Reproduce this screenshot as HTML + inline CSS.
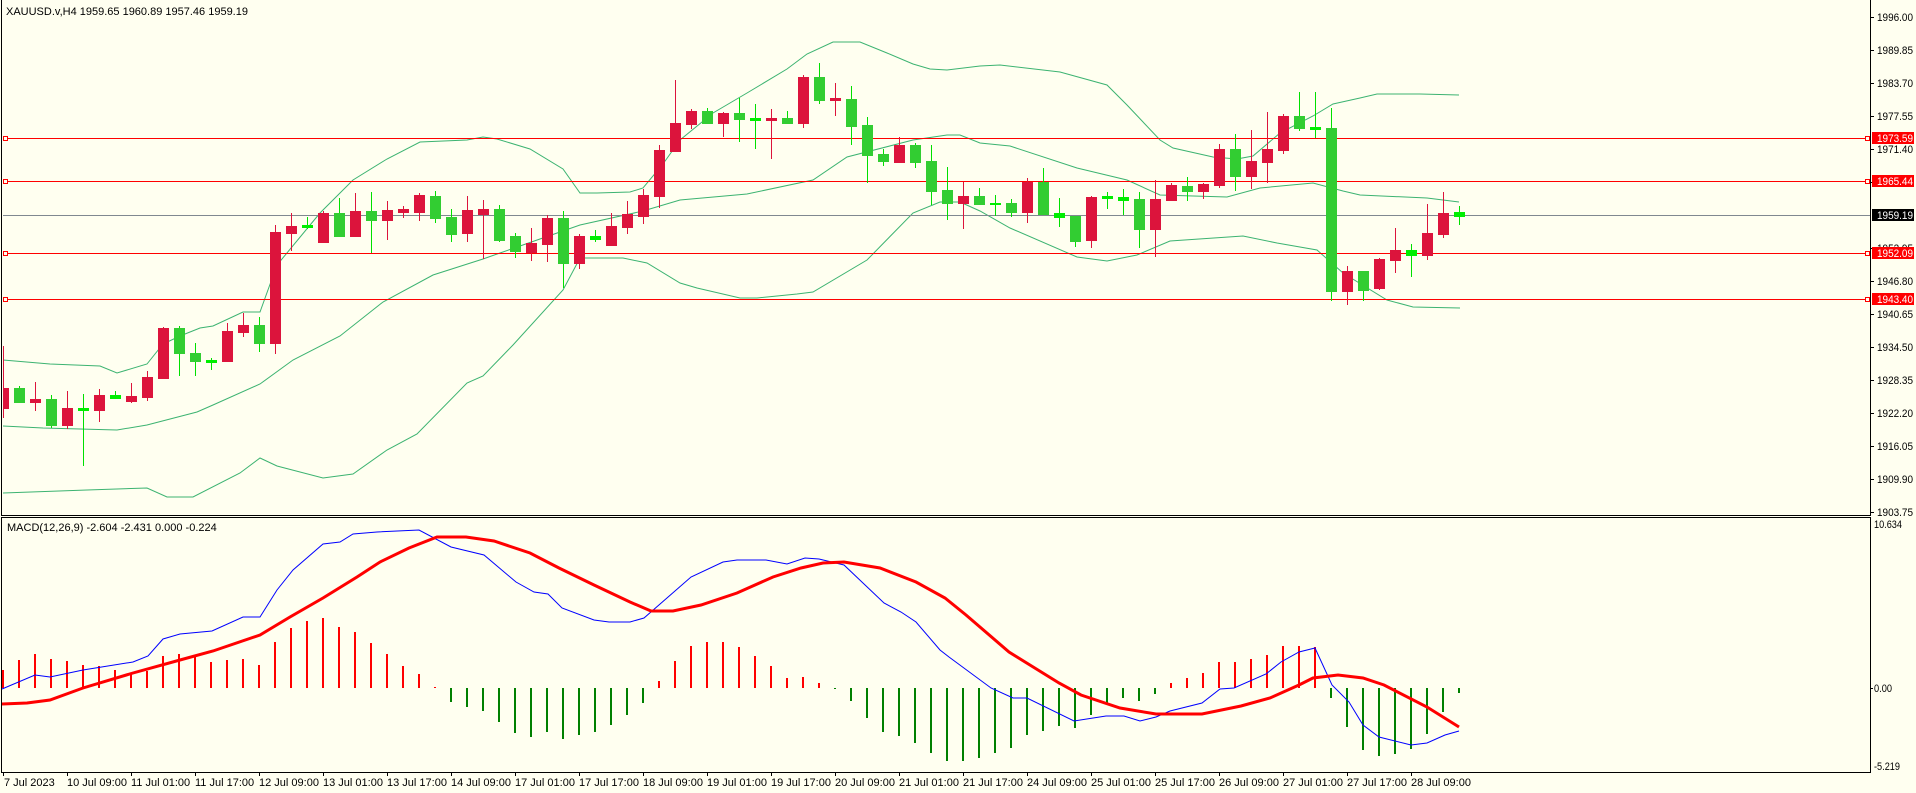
<!DOCTYPE html>
<html><head><meta charset="utf-8"><style>
html,body{margin:0;padding:0;background:#fffff0;width:1916px;height:793px;overflow:hidden}
svg{display:block}
text{font-family:"Liberation Sans",sans-serif;font-size:11px;fill:#000}
</style></head><body>
<svg width="1916" height="793" viewBox="0 0 1916 793" xmlns="http://www.w3.org/2000/svg" shape-rendering="crispEdges">
<rect width="1916" height="793" fill="#fffff0"/>
<path d="M1.5 0V515.5H1870.5V0M1.5 517.5H1870.5V772.5H1.5Z" fill="none" stroke="#000" stroke-width="1"/>
<g fill="none" stroke="#3cb371" stroke-width="1" shape-rendering="auto">
<polyline points="3,360 50,364 100,366 117,373 147,364 163,344 180,336 200,328 213,326 243,312 260,312 277,265 320,213 353,180 387,159 420,142 467,140 483,137 497,139 530,149 563,169 580,193 597,193 630,192 643,188 663,164 680,140 713,113 747,93 787,69 807,54 833,42 860,42 887,53 913,64 930,69 947,70 980,66 1000,65 1060,72 1107,85 1127,105 1160,140 1173,148 1213,157 1237,159 1253,156 1280,133 1313,116 1333,104 1360,98 1377,94 1420,94 1459,95"/>
<polyline points="3,426 43,428 117,430 147,425 197,412 213,405 260,384 293,360 340,336 383,302 433,275 483,259 500,253 580,225 643,211 680,200 747,194 813,180 847,157 913,140 947,135 960,135 980,143 1010,146 1077,168 1127,180 1160,195 1227,197 1260,188 1313,183 1343,191 1360,195 1427,198 1459,202"/>
<polyline points="3,493 87,490 147,488 167,497 193,497 240,473 260,458 277,466 323,478 353,474 387,450 417,434 467,383 483,376 513,345 563,290 580,258 623,258 647,263 680,283 697,288 740,298 757,298 797,294 813,292 867,260 913,213 940,202 960,202 980,211 1010,228 1077,257 1107,261 1137,255 1170,241 1243,236 1277,243 1317,250 1343,273 1387,300 1413,307 1460,308"/>
</g>
<g stroke-width="1" fill="none">
<path d="M3 138.5H1867M3 181.5H1867M3 253.5H1867M3 299.5H1867" stroke="#ff0000"/>
<path d="M3 215.5H1870" stroke="#808890"/>
<g stroke="#ff0000" fill="#fffff0">
<rect x="3.5" y="136.5" width="4" height="4"/><rect x="3.5" y="179.5" width="4" height="4"/><rect x="3.5" y="251.5" width="4" height="4"/><rect x="3.5" y="297.5" width="4" height="4"/>
<rect x="1865.5" y="136.5" width="4" height="4"/><rect x="1865.5" y="179.5" width="4" height="4"/><rect x="1865.5" y="251.5" width="4" height="4"/><rect x="1865.5" y="297.5" width="4" height="4"/>
</g>
</g>
<path stroke="#dc143c" stroke-width="1" d="M3.5 346V418M35.5 382V411M67.5 391V429M99.5 389V422M131.5 383V403M147.5 371V401M163.5 327V379M227.5 323V361M243.5 313V337M275.5 225V354M291.5 213V251M323.5 211V242M355.5 193V236M387.5 201V240M403.5 206V218M419.5 193V221M467.5 196V242M483.5 200V259M531.5 228V261M547.5 215V262M579.5 234V269M611.5 213V246M627.5 201V234M643.5 189V224M659.5 145V208M675.5 80V151M691.5 109V129M723.5 112V137M771.5 109V159M803.5 75V128M835.5 83V116M899.5 137V162M963.5 182V229M1027.5 178V223M1091.5 196V248M1155.5 180V257M1171.5 183V200M1203.5 183V199M1219.5 144V188M1251.5 130V189M1267.5 112V183M1283.5 114V154M1347.5 266V305M1379.5 258V290M1395.5 228V273M1427.5 204V260M1443.5 192V238"/>
<path stroke="#00e000" stroke-width="1" d="M19.5 386V403M51.5 395V428M83.5 394V466M115.5 391V399M179.5 326V376M195.5 343V376M211.5 358V370M259.5 317V352M307.5 217V229M339.5 198V237M371.5 192V253M435.5 191V223M451.5 209V242M499.5 205V242M515.5 233V258M563.5 211V288M595.5 230V242M707.5 108V124M739.5 98V142M755.5 104V149M787.5 111V123M819.5 63V104M851.5 86V145M867.5 117V183M883.5 149V166M915.5 143V168M931.5 145V205M947.5 167V220M979.5 188V204M995.5 195V216M1011.5 199V217M1043.5 168V214M1059.5 198V227M1075.5 216V247M1107.5 192V209M1123.5 189V215M1139.5 192V248M1187.5 177V201M1235.5 134V191M1299.5 92V131M1315.5 92V138M1331.5 108V301M1363.5 271V301M1411.5 244V277M1459.5 206V225"/>
<g fill="#dc143c">
<rect x="3" y="388" width="6" height="21"/>
<rect x="30" y="399" width="11" height="4"/>
<rect x="62" y="408" width="11" height="18"/>
<rect x="94" y="395" width="11" height="16"/>
<rect x="126" y="396" width="11" height="6"/>
<rect x="142" y="377" width="11" height="21"/>
<rect x="158" y="328" width="11" height="51"/>
<rect x="222" y="331" width="11" height="31"/>
<rect x="238" y="325" width="11" height="8"/>
<rect x="270" y="232" width="11" height="112"/>
<rect x="286" y="226" width="11" height="8"/>
<rect x="318" y="213" width="11" height="30"/>
<rect x="350" y="211" width="11" height="26"/>
<rect x="382" y="210" width="11" height="11"/>
<rect x="398" y="209" width="11" height="4"/>
<rect x="414" y="195" width="11" height="18"/>
<rect x="462" y="210" width="11" height="24"/>
<rect x="478" y="209" width="11" height="6"/>
<rect x="526" y="243" width="11" height="10"/>
<rect x="542" y="218" width="11" height="27"/>
<rect x="574" y="236" width="11" height="28"/>
<rect x="606" y="226" width="11" height="20"/>
<rect x="622" y="214" width="11" height="14"/>
<rect x="638" y="195" width="11" height="22"/>
<rect x="654" y="150" width="11" height="47"/>
<rect x="670" y="123" width="11" height="29"/>
<rect x="686" y="111" width="11" height="14"/>
<rect x="718" y="113" width="11" height="11"/>
<rect x="766" y="118" width="11" height="3"/>
<rect x="798" y="77" width="11" height="47"/>
<rect x="830" y="98" width="11" height="3"/>
<rect x="894" y="145" width="11" height="18"/>
<rect x="958" y="196" width="11" height="8"/>
<rect x="1022" y="182" width="11" height="31"/>
<rect x="1086" y="197" width="11" height="44"/>
<rect x="1150" y="199" width="11" height="31"/>
<rect x="1166" y="185" width="11" height="16"/>
<rect x="1198" y="184" width="11" height="8"/>
<rect x="1214" y="149" width="11" height="37"/>
<rect x="1246" y="161" width="11" height="16"/>
<rect x="1262" y="149" width="11" height="14"/>
<rect x="1278" y="116" width="11" height="35"/>
<rect x="1342" y="271" width="11" height="21"/>
<rect x="1374" y="259" width="11" height="30"/>
<rect x="1390" y="250" width="11" height="11"/>
<rect x="1422" y="233" width="11" height="23"/>
<rect x="1438" y="213" width="11" height="22"/>
</g>
<g fill="#32cd32">
<rect x="14" y="388" width="11" height="15"/>
<rect x="46" y="399" width="11" height="27"/>
<rect x="78" y="408" width="11" height="3" fill="#00ee00"/>
<rect x="110" y="395" width="11" height="4" fill="#00ee00"/>
<rect x="174" y="328" width="11" height="26"/>
<rect x="190" y="353" width="11" height="9"/>
<rect x="206" y="360" width="11" height="3" fill="#00ee00"/>
<rect x="254" y="325" width="11" height="19"/>
<rect x="302" y="225" width="11" height="3" fill="#00ee00"/>
<rect x="334" y="213" width="11" height="24"/>
<rect x="366" y="211" width="11" height="10"/>
<rect x="430" y="196" width="11" height="23"/>
<rect x="446" y="217" width="11" height="18"/>
<rect x="494" y="209" width="11" height="32"/>
<rect x="510" y="236" width="11" height="16"/>
<rect x="558" y="218" width="11" height="46"/>
<rect x="590" y="236" width="11" height="4" fill="#00ee00"/>
<rect x="702" y="111" width="11" height="13"/>
<rect x="734" y="113" width="11" height="7"/>
<rect x="750" y="118" width="11" height="3" fill="#00ee00"/>
<rect x="782" y="118" width="11" height="6"/>
<rect x="814" y="77" width="11" height="24"/>
<rect x="846" y="99" width="11" height="28"/>
<rect x="862" y="125" width="11" height="31"/>
<rect x="878" y="154" width="11" height="8"/>
<rect x="910" y="145" width="11" height="18"/>
<rect x="926" y="161" width="11" height="31"/>
<rect x="942" y="190" width="11" height="14"/>
<rect x="974" y="196" width="11" height="9"/>
<rect x="990" y="203" width="11" height="2" fill="#00ee00"/>
<rect x="1006" y="203" width="11" height="10"/>
<rect x="1038" y="182" width="11" height="33"/>
<rect x="1054" y="213" width="11" height="5" fill="#00ee00"/>
<rect x="1070" y="216" width="11" height="26"/>
<rect x="1102" y="196" width="11" height="3" fill="#00ee00"/>
<rect x="1118" y="197" width="11" height="4" fill="#00ee00"/>
<rect x="1134" y="199" width="11" height="31"/>
<rect x="1182" y="186" width="11" height="6"/>
<rect x="1230" y="149" width="11" height="28"/>
<rect x="1294" y="116" width="11" height="13"/>
<rect x="1310" y="127" width="11" height="3" fill="#00ee00"/>
<rect x="1326" y="128" width="11" height="164"/>
<rect x="1358" y="271" width="11" height="20"/>
<rect x="1406" y="250" width="11" height="6" fill="#00ee00"/>
<rect x="1454" y="212" width="11" height="5" fill="#00ee00"/>
</g>
<path stroke="#ff0000" stroke-width="2" d="M3 688V670M19 688V660M35 688V654M51 688V659M67 688V661M83 688V665M99 688V666M115 688V670M131 688V673M147 688V671M163 688V656M179 688V654M195 688V656M211 688V662M227 688V660M243 688V659M259 688V665M275 688V642M291 688V628M307 688V621M323 688V618M339 688V627M355 688V632M371 688V643M387 688V654M403 688V666M419 688V674M435 688V687M659 688V681M675 688V661M691 688V646M707 688V642M723 688V642M739 688V647M755 688V656M771 688V666M787 688V678M803 688V677M819 688V683M1171 688V683M1187 688V678M1203 688V673M1219 688V662M1235 688V662M1251 688V659M1267 688V655M1283 688V646M1299 688V646M1315 688V647"/>
<path stroke="#008000" stroke-width="2" d="M451 688V702M467 688V707M483 688V711M499 688V722M515 688V733M531 688V737M547 688V732M563 688V739M579 688V735M595 688V732M611 688V725M627 688V715M643 688V703M835 688V689M851 688V701M867 688V718M883 688V732M899 688V736M915 688V743M931 688V753M947 688V761M963 688V761M979 688V758M995 688V753M1011 688V748M1027 688V735M1043 688V731M1059 688V726M1075 688V728M1091 688V715M1107 688V704M1123 688V698M1139 688V701M1155 688V694M1331 688V698M1347 688V727M1363 688V750M1379 688V756M1395 688V754M1411 688V749M1427 688V734M1443 688V712M1459 688V693"/>
<g fill="none" shape-rendering="auto">
<polyline stroke="#0000ff" stroke-width="1" points="2,689 35,675 50,677 83,670 133,662 148,656 163,639 180,634 212,631 243,617 260,617 277,590 293,570 323,544 340,542 353,534 377,532 419,530 451,547 484,555 516,582 534,592 548,594 562,608 594,620 609,622 630,622 644,618 691,577 723,562 737,560 766,560 787,564 805,558 819,559 844,565 884,603 901,612 916,622 940,650 949,657 991,688 1013,698 1027,698 1074,721 1106,716 1124,716 1140,721 1156,717 1170,711 1202,703 1220,689 1234,688 1266,674 1281,662 1299,652 1315,648 1332,685 1349,702 1363,725 1379,737 1411,745 1427,743 1445,735 1459,731"/>
<polyline stroke="#ff0000" stroke-width="3" points="2,704 27,703 50,700 83,688 133,673 180,660 213,651 260,635 290,617 323,598 357,577 380,562 409,548 437,537 466,537 494,541 530,553 559,568 594,585 630,602 651,611 673,611 701,605 737,593 773,577 801,568 823,563 844,562 880,568 916,582 945,598 966,615 1009,652 1059,683 1081,695 1120,708 1156,714 1202,714 1241,706 1270,698 1299,685 1313,678 1338,675 1363,678 1384,685 1427,707 1459,727"/>
</g>
<path stroke="#000" stroke-width="1" d="M1870 17.5h4M1870 50.5h4M1870 83.5h4M1870 116.5h4M1870 149.5h4M1870 182.5h4M1870 248.5h4M1870 281.5h4M1870 314.5h4M1870 347.5h4M1870 380.5h4M1870 413.5h4M1870 446.5h4M1870 479.5h4M1870 512.5h4M1870 688.5h3"/>
<g>
<text x="1877" y="21" textLength="36" lengthAdjust="spacingAndGlyphs">1996.00</text>
<text x="1877" y="54" textLength="36" lengthAdjust="spacingAndGlyphs">1989.85</text>
<text x="1877" y="87" textLength="36" lengthAdjust="spacingAndGlyphs">1983.70</text>
<text x="1877" y="120" textLength="36" lengthAdjust="spacingAndGlyphs">1977.55</text>
<text x="1877" y="153" textLength="36" lengthAdjust="spacingAndGlyphs">1971.40</text>
<text x="1877" y="252" textLength="36" lengthAdjust="spacingAndGlyphs">1952.95</text>
<text x="1877" y="285" textLength="36" lengthAdjust="spacingAndGlyphs">1946.80</text>
<text x="1877" y="318" textLength="36" lengthAdjust="spacingAndGlyphs">1940.65</text>
<text x="1877" y="351" textLength="36" lengthAdjust="spacingAndGlyphs">1934.50</text>
<text x="1877" y="384" textLength="36" lengthAdjust="spacingAndGlyphs">1928.35</text>
<text x="1877" y="417" textLength="36" lengthAdjust="spacingAndGlyphs">1922.20</text>
<text x="1877" y="450" textLength="36" lengthAdjust="spacingAndGlyphs">1916.05</text>
<text x="1877" y="483" textLength="36" lengthAdjust="spacingAndGlyphs">1909.90</text>
<text x="1877" y="516" textLength="36" lengthAdjust="spacingAndGlyphs">1903.75</text>
<text x="1874" y="528" textLength="28" lengthAdjust="spacingAndGlyphs">10.634</text>
<text x="1874" y="692" textLength="18" lengthAdjust="spacingAndGlyphs">0.00</text>
<text x="1874" y="770" textLength="26" lengthAdjust="spacingAndGlyphs">-5.219</text>
</g>
<g>
<rect x="1872" y="132" width="42" height="12" fill="#ff0000"/>
<rect x="1872" y="175" width="42" height="12" fill="#ff0000"/>
<rect x="1872" y="209" width="42" height="12" fill="#000"/>
<rect x="1872" y="247" width="42" height="12" fill="#ff0000"/>
<rect x="1872" y="293" width="42" height="12" fill="#ff0000"/>
<text x="1877" y="142" textLength="36" lengthAdjust="spacingAndGlyphs" style="fill:#fff">1973.59</text>
<text x="1877" y="185" textLength="36" lengthAdjust="spacingAndGlyphs" style="fill:#fff">1965.44</text>
<text x="1877" y="219" textLength="36" lengthAdjust="spacingAndGlyphs" style="fill:#fff">1959.19</text>
<text x="1877" y="257" textLength="36" lengthAdjust="spacingAndGlyphs" style="fill:#fff">1952.09</text>
<text x="1877" y="303" textLength="36" lengthAdjust="spacingAndGlyphs" style="fill:#fff">1943.40</text>
</g>
<text x="6" y="15">XAUUSD.v,H4  1959.65 1960.89 1957.46 1959.19</text>
<text x="7" y="531">MACD(12,26,9) -2.604 -2.431 0.000 -0.224</text>
<path stroke="#000" stroke-width="1" d="M3.5 772v4M67.5 772v4M131.5 772v4M195.5 772v4M259.5 772v4M323.5 772v4M387.5 772v4M451.5 772v4M515.5 772v4M579.5 772v4M643.5 772v4M707.5 772v4M771.5 772v4M835.5 772v4M899.5 772v4M963.5 772v4M1027.5 772v4M1091.5 772v4M1155.5 772v4M1219.5 772v4M1283.5 772v4M1347.5 772v4M1411.5 772v4"/>
<g>
<text x="4" y="786">7 Jul 2023</text>
<text x="67" y="786">10 Jul 09:00</text>
<text x="131" y="786">11 Jul 01:00</text>
<text x="195" y="786">11 Jul 17:00</text>
<text x="259" y="786">12 Jul 09:00</text>
<text x="323" y="786">13 Jul 01:00</text>
<text x="387" y="786">13 Jul 17:00</text>
<text x="451" y="786">14 Jul 09:00</text>
<text x="515" y="786">17 Jul 01:00</text>
<text x="579" y="786">17 Jul 17:00</text>
<text x="643" y="786">18 Jul 09:00</text>
<text x="707" y="786">19 Jul 01:00</text>
<text x="771" y="786">19 Jul 17:00</text>
<text x="835" y="786">20 Jul 09:00</text>
<text x="899" y="786">21 Jul 01:00</text>
<text x="963" y="786">21 Jul 17:00</text>
<text x="1027" y="786">24 Jul 09:00</text>
<text x="1091" y="786">25 Jul 01:00</text>
<text x="1155" y="786">25 Jul 17:00</text>
<text x="1219" y="786">26 Jul 09:00</text>
<text x="1283" y="786">27 Jul 01:00</text>
<text x="1347" y="786">27 Jul 17:00</text>
<text x="1411" y="786">28 Jul 09:00</text>
</g>
</svg>
</body></html>
